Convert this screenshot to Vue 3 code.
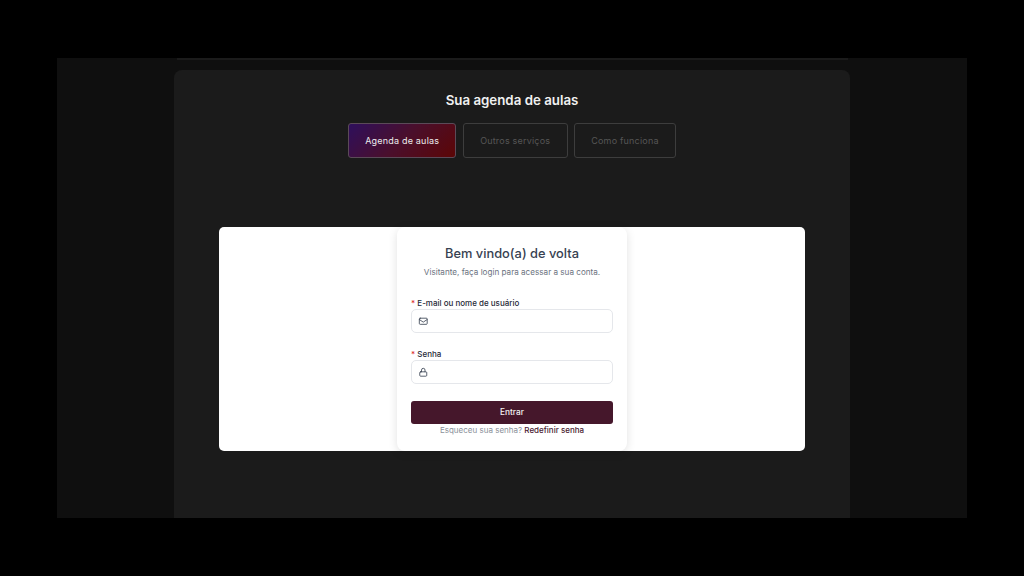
<script setup>
const tabs = [
  { label: 'Agenda de aulas', cls: 'tab-active' },
  { label: 'Outros serviços', cls: 'tab-two' },
  { label: 'Como funciona', cls: 'tab-three' }
]
</script>

<template>
  <div class="screen">
    <div class="stage">
      <div class="topline"></div>
      <section class="panel">
        <h1 class="title">Sua agenda de aulas</h1>
        <nav class="tabs">
          <button v-for="t in tabs" :key="t.label" class="tab" :class="t.cls">{{ t.label }}</button>
        </nav>
        <div class="sheet">
          <form class="login" @submit.prevent>
            <h2 class="welcome">Bem vindo(a) de volta</h2>
            <p class="sub">Visitante, faça login para acessar a sua conta.</p>

            <label class="label label-first"><span class="req">*</span> E-mail ou nome de usuário</label>
            <div class="field">
              <svg class="ico" viewBox="0 0 24 24" fill="none" stroke="#374151" stroke-width="1.9" stroke-linecap="round" stroke-linejoin="round">
                <rect x="3" y="5" width="18" height="14" rx="2" />
                <path d="M3 8l9 6 9-6" />
              </svg>
            </div>

            <label class="label label-second"><span class="req">*</span> Senha</label>
            <div class="field">
              <svg class="ico" viewBox="0 0 24 24" fill="none" stroke="#374151" stroke-width="1.9" stroke-linecap="round" stroke-linejoin="round">
                <rect x="4" y="11" width="16" height="10" rx="2" />
                <path d="M8 11V7a4 4 0 0 1 8 0v4" />
              </svg>
            </div>

            <button class="submit">Entrar</button>
            <p class="forgot">Esqueceu sua senha? <a class="reset">Redefinir senha</a></p>
          </form>
        </div>
      </section>
    </div>
  </div>
</template>

<style>
html, body { margin: 0; background: #000; }
</style>

<style scoped>
.screen {
  width: 1024px;
  height: 576px;
  background: #000;
  padding-top: 58px;
  box-sizing: border-box;
  overflow: hidden;
  font-family: Inter, "Liberation Sans", sans-serif;
}
.stage {
  width: 910px;
  height: 460px;
  margin-left: 57px;
  background: #0f0f0f;
  display: flex;
  flex-direction: column;
  align-items: center;
}
.topline {
  width: 671px;
  height: 2px;
  background: #1b1b1b;
  flex: none;
}
.panel {
  width: 676px;
  flex: 1;
  margin-top: 10px;
  background: #1b1b1b;
  border-radius: 8px 8px 0 0;
  display: flex;
  flex-direction: column;
  align-items: center;
}
.title {
  margin: 21px 0 0;
  font-size: 13.3px;
  line-height: 18px;
  font-weight: 600;
  color: #f0f0f0;
}
.tabs {
  display: flex;
  gap: 6.3px;
  margin-top: 14px;
}
.tab {
  height: 35px;
  box-sizing: border-box;
  padding: 0;
  border: 1px solid #3d3d3d;
  border-radius: 3px;
  background: transparent;
  color: #565656;
  font-family: inherit;
  font-size: 9px;
  letter-spacing: 0.2px;
}
.tab-active {
  width: 108.4px;
  border-color: #5b4a58;
  background: linear-gradient(135deg, #2e0f5c 0%, #4a0f2c 50%, #5c0606 100%);
  color: #ececec;
}
.tab-two { width: 105px; }
.tab-three { width: 102px; }
.sheet {
  width: 586px;
  height: 224px;
  margin-top: 69px;
  background: #fff;
  border-radius: 5px;
  display: flex;
  justify-content: center;
}
.login {
  width: 230px;
  height: 224px;
  box-sizing: border-box;
  padding: 0 14px;
  border-radius: 8px;
  background: #fff;
  box-shadow: 0 2px 10px rgba(0, 0, 0, 0.12);
  display: flex;
  flex-direction: column;
}
.welcome {
  margin: 18px 0 0;
  text-align: center;
  font-size: 12.85px;
  line-height: 18px;
  font-weight: 500;
  color: #374151;
}
.sub {
  margin: 4px 0 0;
  text-align: center;
  font-size: 8.13px;
  line-height: 11px;
  color: #6b7280;
}
.label {
  display: block;
  font-size: 8px;
  line-height: 10px;
  font-weight: 500;
  color: #1f2937;
}
.label-first { margin-top: 20px; }
.label-second { margin-top: 16px; }
.req { color: #dc2626; }
.field {
  height: 24px;
  box-sizing: border-box;
  border: 1px solid #e5e7eb;
  border-radius: 5px;
  display: flex;
  align-items: center;
  padding-left: 6px;
}
.label-first + .field { margin-top: 1px; }
.label-second + .field { margin-top: 1px; }
.ico { width: 10.5px; height: 10.5px; flex: none; }
.submit {
  height: 23px;
  margin-top: 17px;
  padding: 0 0 1px;
  border: none;
  border-radius: 3px;
  background: #45172b;
  color: #f3f3f3;
  font-family: inherit;
  font-size: 8.3px;
  font-weight: 500;
}
.forgot {
  margin: 0;
  text-align: center;
  font-size: 8px;
  line-height: 12px;
  color: #8a9099;
}
.reset { color: #4a1a30; font-weight: 500; }
</style>
